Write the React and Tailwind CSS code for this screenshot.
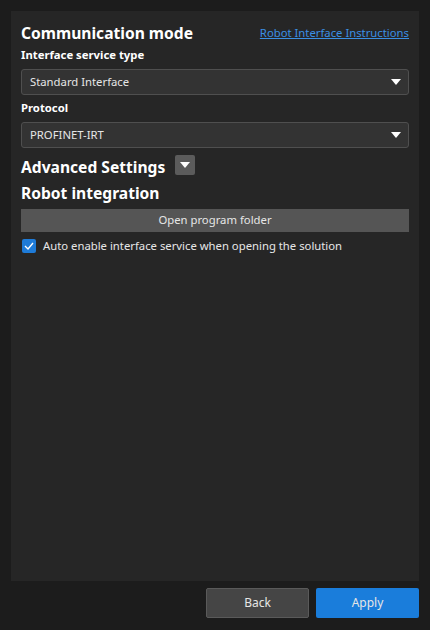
import React from "react";

function Caret({ className = "" }) {
  return (
    <svg width="10" height="6" viewBox="0 0 10 6" className={className}>
      <path d="M0 0 H10 L5 6 Z" fill="#ffffff" />
    </svg>
  );
}

function Select({ value }) {
  return (
    <div className="flex h-[26px] items-center justify-between rounded-[3px] border border-[#4f4f4f] bg-[#333333] pl-[8px] pr-[7px] text-[11.3px] text-[#e6e6e6]">
      <span>{value}</span>
      <Caret />
    </div>
  );
}

export default function App() {
  return (
    <div
      className="flex h-[630px] w-[430px] flex-col bg-[#1c1c1c] pl-[11px] pr-[11px] pt-[11px]"
      style={{ fontFamily: '"Noto Sans", "Open Sans", sans-serif' }}
    >
      <div className="flex h-[570px] flex-col bg-[#262626] px-[10px] pt-[11px]">
        <div className="flex items-center justify-between">
          <span className="text-[15.6px] font-bold leading-[22px] text-white">Communication mode</span>
          <span className="text-[11.3px] leading-[22px] text-[#3b8fe3] underline">Robot Interface Instructions</span>
        </div>
        <div className="mt-[1px] text-[11.3px] font-bold leading-[20px] text-white">Interface service type</div>
        <div className="mt-[4px]">
          <Select value="Standard Interface" />
        </div>
        <div className="mt-[3px] text-[11.3px] font-bold leading-[20px] text-white">Protocol</div>
        <div className="mt-[4px]">
          <Select value="PROFINET-IRT" />
        </div>
        <div className="mt-[7px] flex items-center gap-[10px]">
          <span className="text-[15.6px] font-bold leading-[22px] text-white">Advanced Settings</span>
          <div className="mb-[3px] flex h-[20px] w-[20px] items-center justify-center rounded-[2px] bg-[#5b5b5b]">
            <Caret />
          </div>
        </div>
        <div className="mt-[4px] text-[15.6px] font-bold leading-[22px] text-white">Robot integration</div>
        <div className="mt-[5px] flex h-[23px] items-center justify-center bg-[#555555] text-[11.3px] text-[#e6e6e6]">
          Open program folder
        </div>
        <div className="mt-[6px] flex items-center gap-[7px]">
          <div className="ml-[1px] flex h-[14px] w-[14px] items-center justify-center rounded-[2px] bg-[#1e7bd8]">
            <svg width="10" height="8" viewBox="0 0 10 8">
              <path d="M1 4 L4 7 L9 1" stroke="#ffffff" strokeWidth="1.4" fill="none" />
            </svg>
          </div>
          <span className="text-[11.3px] leading-[16px] text-[#e6e6e6]">Auto enable interface service when opening the solution</span>
        </div>
      </div>
      <div className="mt-[7px] flex justify-end gap-[7px]">
        <div className="flex h-[30px] w-[103px] items-center justify-center rounded-[2px] border border-[#5a5a5a] bg-[#454545] text-[12px] text-[#e6e6e6]">
          Back
        </div>
        <div className="flex h-[30px] w-[103px] items-center justify-center rounded-[2px] bg-[#1a7ddb] text-[12px] text-[#e6e6e6]">
          Apply
        </div>
      </div>
    </div>
  );
}
